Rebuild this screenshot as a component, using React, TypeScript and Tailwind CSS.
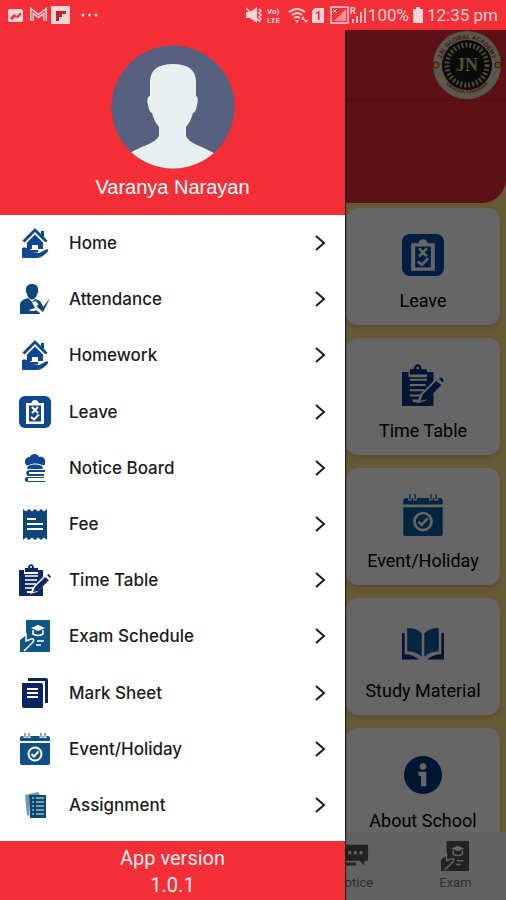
import type { ReactNode } from "react";

type IconProps = { className?: string };

function Svg({ className = "", children }: { className?: string; children: ReactNode }) {
  return (
    <svg viewBox="0 0 32 32" className={className} fill="currentColor" aria-hidden="true">
      {children}
    </svg>
  );
}

function HomeIcon({ className }: IconProps) {
  return (
    <Svg className={className}>
      <path d="M16 1 3.500 13.500l2 2L16 5l10.500 10.500 2-2L25 10V4h-3v3Z" />
      <path d="M16 7.500 8 15.500V22h5v-4h6v4h5v-6.500Z" />
      <path d="M3 21c4-1 7 0 9 2h6c2 0 2 2 0 2.500l-5 .5h7l7-3.500c2-.6 3 1 1.500 2.500-4 4-7 6-11 6H3Z" />
    </Svg>
  );
}

function AttendanceIcon({ className }: IconProps) {
  return (
    <Svg className={className}>
      <path d="M7 8C6.500 3 9 1 13 1s6.500 2 6 6.500c.8 1 0 2.500-.7 3C17.500 14.500 15 16.500 13 16.500s-4.500-2-5.200-6.500c-.8-.2-1.300-1.200-.8-2Z" />
      <path d="M1 29v-7c0-4 4-6 8-7l4 4 3-3 5 2 3 5-3 8H1Z" />
      <path d="m13 19 4-1 7 10-2 3-5-4-3 2-4-2 6-2Z" fill="#fff" />
      <path d="m19 21 5 3 7-9-7 14-6-5Z" />
      <path d="M4 28h12v3H4Z" />
    </Svg>
  );
}

function LeaveIcon({ className }: IconProps) {
  return (
    <Svg className={className}>
      <rect x="0" y="0" width="32" height="32" rx="6" />
      <path d="M7 7h5.500c0-4 7-4 7 0H25v21H7Z" fill="#fff" />
      <path d="M10 9.500h12v16H10Z" />
      <path d="m13 11 6 6m0-6-6 6m-1 4 3 2.500 5-5" fill="none" stroke="#fff" strokeWidth="2" />
    </Svg>
  );
}

function NoticeBoardIcon({ className }: IconProps) {
  return (
    <Svg className={className}>
      <path d="M11 5c1-4 8-4 9 0 4-1 7 2 6 6 0 2-1 3-3 2-4-2-9-2-13 0-2 1-4 0-4-3 0-3 2-5 5-5Z" />
      <path d="M9 14c4-2 10-2 14 0l1 3H8ZM10 18h16v2H10v2h15v2H9c-3-2-2-5 1-6ZM8 25h17v1H9v3h17v1H8c-3-1-3-4 0-5Z" />
    </Svg>
  );
}

function FeeIcon({ className }: IconProps) {
  return (
    <Svg className={className}>
      <path d="m4 1 3 2.500 3-2.500 3 2.500 3-2.500 3 2.500 3-2.500 3 2.500 3-2.500v31l-3-2.500-3 2.500-3-2.500-3 2.500-3-2.500-3 2.500-3-2.500-3 2.500Z" />
      <path d="M8 11h9M8 16h16M8 21h16" stroke="#fff" strokeWidth="2" />
    </Svg>
  );
}

function TimeTableIcon({ className }: IconProps) {
  return (
    <Svg className={className}>
      <path d="M0 6h5v4h14V6h5v26H0Z" />
      <path d="M6 4h3c0-5 6-5 6 0h4v4H6Z" />
      <circle cx="12" cy="3" r="1" fill="#fff" />
      <path d="M6 12h13M6 16h12M6 20h11M6 24h8" stroke="#fff" strokeWidth="1.500" />
      <path d="M11 30 14 23 28 9l4 5-14 14Z" fill="#fff" />
      <path d="m14 28 2-5L26 13l4 3-11 11Zm14-17 2-1 2 3-1 1Z" />
      <path d="M8 28h4" stroke="#fff" strokeWidth="2" />
    </Svg>
  );
}

function ExamIcon({ className }: IconProps) {
  return (
    <Svg className={className}>
      <path d="M7 0h23q1 0 1 1v30q0 1-1 1H1V20l6-5Z" />
      <path d="m12 8 7-3 7 3-7 3Z" fill="#fff" />
      <path d="M14 10v4q5 3 10 0v-4" fill="none" stroke="#fff" strokeWidth="1.500" />
      <path d="m1 19 6-5v7l5-2c4-1 3 3 0 5l-7 7" fill="none" stroke="#fff" strokeWidth="1.500" />
      <path d="M18 21h7M17 25h5" stroke="#fff" strokeWidth="1.500" />
    </Svg>
  );
}

function MarkSheetIcon({ className }: IconProps) {
  return (
    <Svg className={className}>
      <path d="M9 1h18q2 0 2 2v23h-3V4H9ZM3 6h19q2 0 2 2v22q0 1-1 1H5q-2 0-2-2Z" />
      <path d="M8 12h11M8 16h11M8 20h11" stroke="#fff" strokeWidth="2" />
    </Svg>
  );
}

function EventIcon({ className }: IconProps) {
  return (
    <Svg className={className}>
      <path d="M1 8V5q0-2 2-2h26q2 0 2 2v3ZM1 10h30v20q0 2-2 2H3q-2 0-2-2Z" />
      <path d="M6 5V0m4 5V0m12 5V0m4 5V0" stroke="#fff" strokeWidth="3" />
      <path d="M6 4V0m4 4V0m12 4V0m4 4V0" stroke="currentColor" strokeWidth="1" />
      <circle cx="16" cy="21" r="6.500" fill="none" stroke="#fff" strokeWidth="2" />
      <path d="m12.500 21 2.500 2.500 4.500-5" fill="none" stroke="#fff" strokeWidth="2" />
    </Svg>
  );
}

function AssignmentIcon({ className }: IconProps) {
  return (
    <Svg className={className}>
      <path d="m6 6 13-3 2 3H10v21l-2-1Z" fill="#6f98ae" />
      <path d="M10 6h17v23H11Z" />
      <path d="M13 9h12M13 13h12M13 17h12M13 21h12M13 25h12" stroke="#9bbdca" strokeWidth="1.500" />
      <path d="M16 8v18" stroke="#0d4a73" strokeWidth="2" />
    </Svg>
  );
}

function BookIcon({ className }: IconProps) {
  return (
    <Svg className={className}>
      <path d="M4 3q7 0 11 4v18q-4-4-11-4ZM28 3q-7 0-11 4v18q4-4 11-4Z" />
      <path d="M0 7h2v16q6 0 11 4H0ZM32 7h-2v16q-6 0-11 4h13Z" fill="#14287f" />
    </Svg>
  );
}

function InfoIcon({ className }: IconProps) {
  return (
    <Svg className={className}>
      <circle cx="16" cy="16" r="14.500" />
      <circle cx="16" cy="9.500" r="2.500" fill="#fff" />
      <path d="M13 14h5v10h-3v-8h-2Z" fill="#fff" stroke="#fff" strokeLinejoin="round" />
    </Svg>
  );
}

function ChatIcon({ className }: IconProps) {
  return (
    <Svg className={className}>
      <path d="M1 4h30v17h-4v5l-5-5H1ZM2 23h16v3H2Z" />
      <path d="M10 11h3v3h-3Zm6 0h3v3h-3Zm6 0h3v3h-3Z" fill="#fff" />
    </Svg>
  );
}

function StatusBar() {
  return (
    <header className="relative z-20 flex h-[30px] shrink-0 items-center bg-[#f52f38] px-2 text-[#ffd3d5]">
      <svg viewBox="0 0 92 20" className="h-5 w-[92px]" fill="currentColor" aria-label="Notifications">
        <rect x="0" y="4" width="15" height="13" rx="2" />
        <path d="m2 13 4-4 3 2 4-4v3l-3 3-3-1-3 3Z" fill="#f52f38" />
        <path d="M24 16V6l6.500 5L37 6v10" fill="none" stroke="currentColor" strokeWidth="4" />
        <path d="M24 16V6l6.500 5L37 6v10" fill="none" stroke="#f52f38" strokeWidth="1" />
        <rect x="43" y="1" width="19" height="18" />
        <path d="M48 6h10v3h-4v3h-3v4h-3Z" fill="#b92831" />
        <circle cx="75" cy="10" r="1.500" />
        <circle cx="81.500" cy="10" r="1.500" />
        <circle cx="88" cy="10" r="1.500" />
      </svg>
      <div className="ml-auto flex items-center font-['Roboto',sans-serif]">
        <svg viewBox="0 0 122 20" className="h-5 w-[122px]" fill="currentColor" aria-label="Sound off, Wi-Fi, SIM 1">
          <path d="M0 7h4l7-5v16l-7-5H0Z" />
          <path d="m0 3 14 14M13 4l2 2-2 2 2 2-2 2 2 2-2 2" stroke="currentColor" strokeWidth="1.500" fill="none" />
          <text x="21" y="9" fontSize="8" fontWeight="700">Vo)</text>
          <text x="21" y="18" fontSize="8" fontWeight="700">LTE</text>
          <path d="M43 7q8-6 16 0M46 10q5-4 10 0M48 13q3-2 6 0" stroke="currentColor" strokeWidth="2" fill="none" />
          <path d="m49 15 2 3 2-3Zm6 0 2-4 2 4Zm3 0h4l-2 3Z" />
          <path d="M69 3h9v15H66V6Z" />
          <text x="69" y="15" fontSize="12" fontWeight="700" fill="#f52f38">1</text>
          <rect x="85" y="2" width="17" height="16" fill="none" stroke="currentColor" strokeWidth="1.500" />
          <path d="M88 16 100 4v12Z" opacity=".6" />
          <path d="m87 4 4 4m0-4-4 4" stroke="currentColor" />
          <text x="104" y="9" fontSize="9" fontWeight="700">R</text>
          <path d="M106 18v-4h2v4Zm4 0v-7h2v7Zm4 0V7h2v11Zm4 0V3h2v15Z" opacity=".85" />
        </svg>
        <span className="text-[17px] leading-5">100%</span>
        <svg viewBox="0 0 10 16" className="mx-1 h-4 w-[10px]" fill="currentColor" aria-hidden="true">
          <path d="M3 0h4v2h3v14H0V2h3Z" />
        </svg>
        <span className="text-[17px] leading-5">12:35 pm</span>
      </div>
    </header>
  );
}

function SchoolLogo() {
  return (
    <svg viewBox="0 0 70 70" className="size-[70px]" aria-label="J.N. Global Academy">
      <defs>
        <path id="upper-ring" d="M10 42a26 26 0 1 1 50 0" />
        <path id="lower-ring" d="M9 47a29 29 0 0 0 52 0" />
      </defs>
      <circle cx="35" cy="35" r="34" fill="#dcd9c4" />
      <circle cx="35" cy="35" r="25" fill="#1a1c16" />
      <circle cx="35" cy="35" r="20" fill="none" stroke="#bdb584" strokeWidth="5" strokeDasharray="2 2" />
      <circle cx="35" cy="35" r="16" fill="#1a1c16" />
      <g fontFamily="Liberation Sans, sans-serif" fontWeight="700" fill="#b42a20">
        <text fontSize="6">
          <textPath href="#upper-ring" startOffset="50%" textAnchor="middle">J.N. GLOBAL ACADEMY</textPath>
        </text>
        <text fontSize="5">
          <textPath href="#lower-ring" startOffset="50%" textAnchor="middle">Varanasi, Chandauli</textPath>
        </text>
      </g>
      <circle cx="4" cy="35" r="3" fill="#f5c83c" stroke="#b42a20" />
      <circle cx="66" cy="35" r="3" fill="#f5c83c" stroke="#b42a20" />
      <text x="35" y="41" textAnchor="middle" fontFamily="Liberation Serif, serif" fontWeight="700" fontSize="18" fill="#d5c66c">
        JN
      </text>
    </svg>
  );
}

const tiles = [
  { label: "Leave", icon: <LeaveIcon className="size-[42px] text-[#0a4ba8]" /> },
  { label: "Time Table", icon: <TimeTableIcon className="size-[42px] text-[#06357e]" /> },
  { label: "Event/Holiday", icon: <EventIcon className="size-[42px] text-[#0a5c9c]" /> },
  { label: "Study Material", icon: <BookIcon className="size-[42px] text-[#0a5c9c]" /> },
  { label: "About School", icon: <InfoIcon className="size-[42px] text-[#06357e]" /> },
];

function Dashboard() {
  return (
    <div className="flex flex-1 flex-col bg-[#ffe08a] font-['Roboto',sans-serif]">
      <div className="h-[173px] shrink-0 rounded-br-[24px] bg-[#e62c37]">
        <div className="flex h-[71px] justify-end border-b border-[#c2252d] pr-1">
          <SchoolLogo />
        </div>
      </div>
      <div className="grid flex-1 grid-cols-3 content-start gap-x-4 gap-y-[13px] px-[6px] pt-[5px]">
        {tiles.map((tile) => (
          <button
            key={tile.label}
            type="button"
            className="col-start-3 flex h-[117px] flex-col items-center gap-[13px] rounded-[12px] bg-white pt-[26px] text-lg leading-6 whitespace-nowrap text-black shadow-md last:-mb-[13px] last:rounded-b-none"
          >
            {tile.icon}
            {tile.label}
          </button>
        ))}
      </div>
      <nav className="grid h-[68px] shrink-0 grid-cols-5 bg-[#f6f6f6] text-[13px] leading-4 text-[#777]">
        <a href="#notice" className="col-start-4 flex flex-col items-center gap-1 pt-[9px]">
          <ChatIcon className="size-[30px] text-[#555]" />
          Notice
        </a>
        <a href="#exam" className="flex flex-col items-center gap-1 pt-[9px]">
          <ExamIcon className="size-[30px] text-[#555]" />
          Exam
        </a>
      </nav>
    </div>
  );
}

const menu = [
  { label: "Home", icon: <HomeIcon className="size-8 text-[#0f4791]" /> },
  { label: "Attendance", icon: <AttendanceIcon className="size-8 text-[#0d4679]" /> },
  { label: "Homework", icon: <HomeIcon className="size-8 text-[#0f4791]" /> },
  { label: "Leave", icon: <LeaveIcon className="size-8 text-[#0f4791]" /> },
  { label: "Notice Board", icon: <NoticeBoardIcon className="size-8 text-[#0f4791]" /> },
  { label: "Fee", icon: <FeeIcon className="size-8 text-[#0d4679]" /> },
  { label: "Time Table", icon: <TimeTableIcon className="size-8 text-[#0b2a63]" /> },
  { label: "Exam Schedule", icon: <ExamIcon className="size-8 text-[#0f5685]" /> },
  { label: "Mark Sheet", icon: <MarkSheetIcon className="size-8 text-[#0b2461]" /> },
  { label: "Event/Holiday", icon: <EventIcon className="size-8 text-[#0f5087]" /> },
  { label: "Assignment", icon: <AssignmentIcon className="size-8 text-[#0d4a73]" /> },
];

function Drawer() {
  return (
    <aside className="absolute inset-y-0 left-0 flex w-[345px] flex-col bg-white pt-[30px] shadow-[1px_0_1px_#000000b0]">
      <div className="flex h-[185px] shrink-0 flex-col items-center gap-[6px] bg-[#f52f38] pt-[15px]">
        <svg viewBox="0 0 124 124" className="size-[124px]" aria-label="Profile picture">
          <defs>
            <clipPath id="avatar">
              <circle cx="62" cy="62" r="61.500" />
            </clipPath>
          </defs>
          <g clipPath="url(#avatar)">
            <path d="M0 0h124v124H0Z" fill="#56607f" />
            <path
              d="M39 51V37q0-18 23-18t23 18v14q3 1 1 9-1 7-4 8-2 8-7 14v9q2 5 11 9 12 5 26 13v18H12v-18q10-8 26-14 8-4 10-8V82q-5-6-7-14-3-1-4-8-2-8 2-9Z"
              fill="#e8efef"
            />
          </g>
        </svg>
        <h1 className="text-xl leading-6 text-white">Varanya Narayan</h1>
      </div>
      <nav className="flex flex-1 flex-col pb-2">
        {menu.map((item) => (
          <a
            key={item.label}
            href={"#" + item.label}
            className="flex min-h-12 flex-1 items-center gap-[18px] px-[19px] font-['Inter','Liberation_Sans',sans-serif] text-[17px] leading-6 font-medium text-[#1c1c1c]"
          >
            {item.icon}
            <span className="flex-1">{item.label}</span>
            <svg viewBox="0 0 12 16" className="h-4 w-3" fill="none" stroke="#1c1c1c" strokeWidth="2" aria-hidden="true">
              <path d="m2 1 8 7-8 7" />
            </svg>
          </a>
        ))}
      </nav>
      <footer className="flex h-[59px] shrink-0 flex-col items-center bg-[#f52f38] pt-1 font-['Roboto',sans-serif] text-xl leading-[27px] text-[#ffecec]">
        <span>App version</span>
        <span>1.0.1</span>
      </footer>
    </aside>
  );
}

export default function App() {
  return (
    <div className="relative flex min-h-screen flex-col overflow-hidden font-['Liberation_Sans',sans-serif]">
      <StatusBar />
      <Dashboard />
      <div className="absolute inset-0 bg-black/60" />
      <Drawer />
    </div>
  );
}
